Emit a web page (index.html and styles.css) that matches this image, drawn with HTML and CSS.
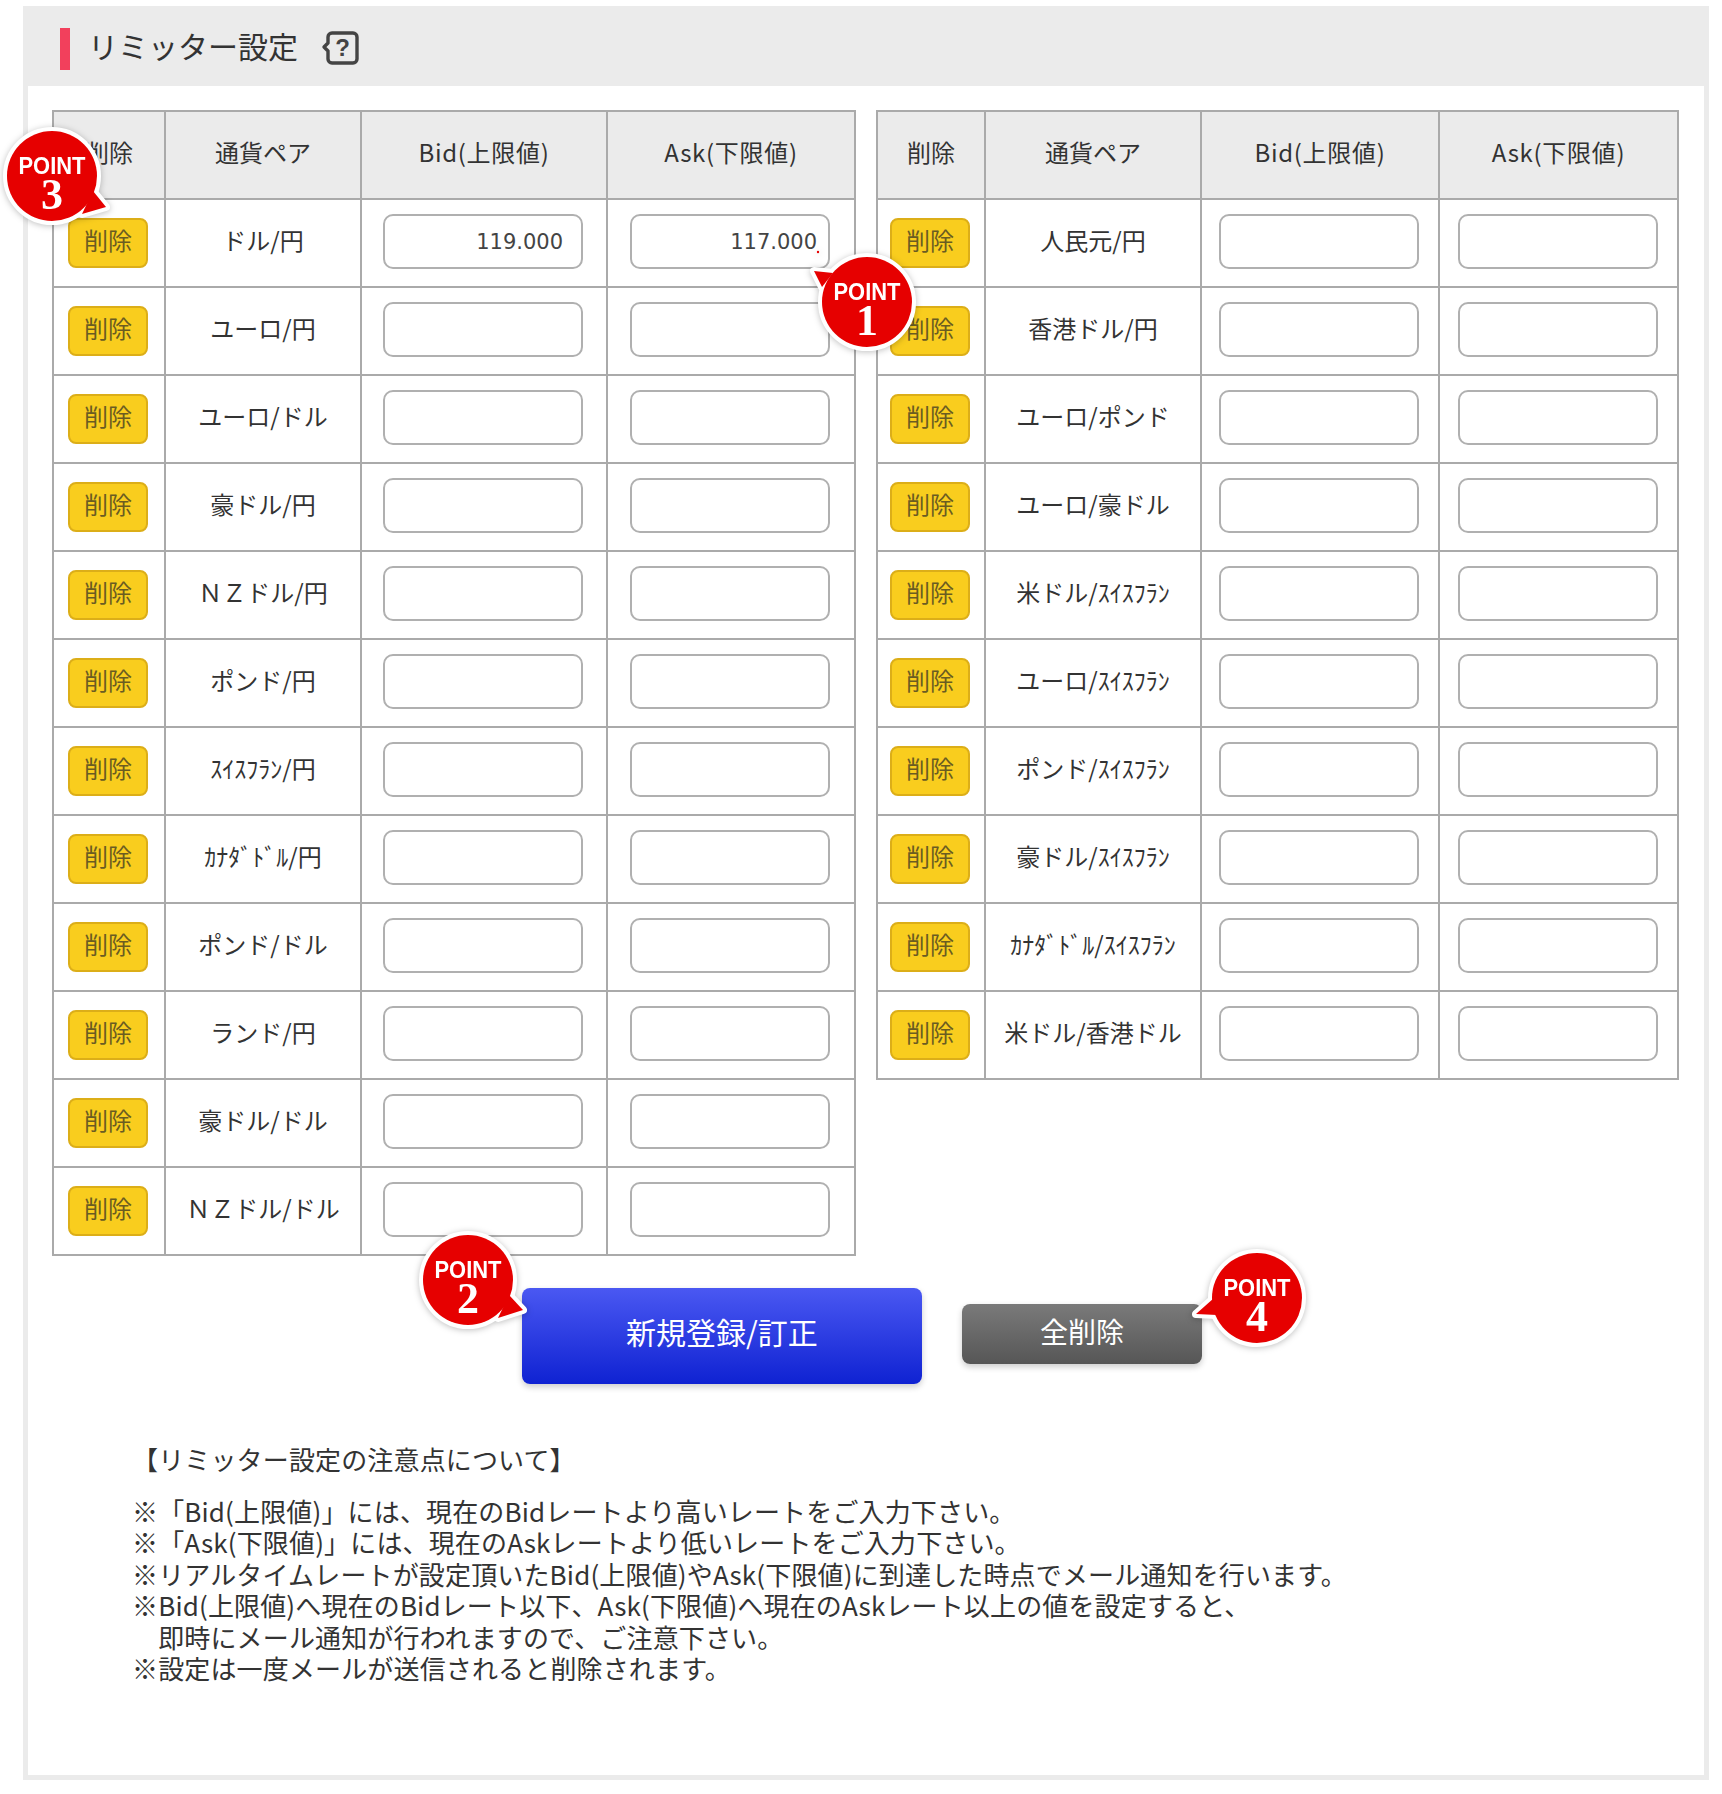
FILE: index.html
```html
<!DOCTYPE html>
<html lang="ja">
<head>
<meta charset="utf-8">
<title>リミッター設定</title>
<link rel="stylesheet" href="styles.css">
</head>
<body>
<div class="page">
  <header class="head">
    <span class="head-bar"></span>
    <h1 class="head-title">リミッター設定</h1>
    <svg class="help" viewBox="0 0 40 36" width="40" height="36"><path d="M8 13V7a4 4 0 0 1 4-4h21a4 4 0 0 1 4 4v22a4 4 0 0 1-4 4H12a4 4 0 0 1-4-4V21L4 17z" fill="none" stroke="#444" stroke-width="3.4" stroke-linejoin="round"/><text x="22.5" y="26" class="help-q">?</text></svg>
  </header>
  <main class="panel">
    <div class="tables">
      <table class="rate rate-left">
        <colgroup><col class="c-l1"><col class="c-l2"><col class="c-l3"><col class="c-l4"></colgroup>
        <tr><th>削除</th><th>通貨ペア</th><th class="th-rate">Bid(上限値)</th><th class="th-rate">Ask(下限値)</th></tr>
        <tr><td><button class="del">削除</button></td><td>ドル/円</td><td><input class="num" value="119.000"></td><td><input class="num num-tight" value="117.000"></td></tr>
        <tr><td><button class="del">削除</button></td><td>ユーロ/円</td><td><input class="num"></td><td><input class="num"></td></tr>
        <tr><td><button class="del">削除</button></td><td>ユーロ/ドル</td><td><input class="num"></td><td><input class="num"></td></tr>
        <tr><td><button class="del">削除</button></td><td>豪ドル/円</td><td><input class="num"></td><td><input class="num"></td></tr>
        <tr><td><button class="del">削除</button></td><td>ＮＺドル/円</td><td><input class="num"></td><td><input class="num"></td></tr>
        <tr><td><button class="del">削除</button></td><td>ポンド/円</td><td><input class="num"></td><td><input class="num"></td></tr>
        <tr><td><button class="del">削除</button></td><td>ｽｲｽﾌﾗﾝ/円</td><td><input class="num"></td><td><input class="num"></td></tr>
        <tr><td><button class="del">削除</button></td><td>ｶﾅﾀﾞﾄﾞﾙ/円</td><td><input class="num"></td><td><input class="num"></td></tr>
        <tr><td><button class="del">削除</button></td><td>ポンド/ドル</td><td><input class="num"></td><td><input class="num"></td></tr>
        <tr><td><button class="del">削除</button></td><td>ランド/円</td><td><input class="num"></td><td><input class="num"></td></tr>
        <tr><td><button class="del">削除</button></td><td>豪ドル/ドル</td><td><input class="num"></td><td><input class="num"></td></tr>
        <tr><td><button class="del">削除</button></td><td>ＮＺドル/ドル</td><td><input class="num"></td><td><input class="num"></td></tr>
      </table>
      <table class="rate rate-right">
        <colgroup><col class="c-r1"><col class="c-r2"><col class="c-r3"><col class="c-r4"></colgroup>
        <tr><th>削除</th><th>通貨ペア</th><th class="th-rate">Bid(上限値)</th><th class="th-rate">Ask(下限値)</th></tr>
        <tr><td><button class="del">削除</button></td><td>人民元/円</td><td><input class="num"></td><td><input class="num"></td></tr>
        <tr><td><button class="del">削除</button></td><td>香港ドル/円</td><td><input class="num"></td><td><input class="num"></td></tr>
        <tr><td><button class="del">削除</button></td><td>ユーロ/ポンド</td><td><input class="num"></td><td><input class="num"></td></tr>
        <tr><td><button class="del">削除</button></td><td>ユーロ/豪ドル</td><td><input class="num"></td><td><input class="num"></td></tr>
        <tr><td><button class="del">削除</button></td><td>米ドル/ｽｲｽﾌﾗﾝ</td><td><input class="num"></td><td><input class="num"></td></tr>
        <tr><td><button class="del">削除</button></td><td>ユーロ/ｽｲｽﾌﾗﾝ</td><td><input class="num"></td><td><input class="num"></td></tr>
        <tr><td><button class="del">削除</button></td><td>ポンド/ｽｲｽﾌﾗﾝ</td><td><input class="num"></td><td><input class="num"></td></tr>
        <tr><td><button class="del">削除</button></td><td>豪ドル/ｽｲｽﾌﾗﾝ</td><td><input class="num"></td><td><input class="num"></td></tr>
        <tr><td><button class="del">削除</button></td><td>ｶﾅﾀﾞﾄﾞﾙ/ｽｲｽﾌﾗﾝ</td><td><input class="num"></td><td><input class="num"></td></tr>
        <tr><td><button class="del">削除</button></td><td>米ドル/香港ドル</td><td><input class="num"></td><td><input class="num"></td></tr>
      </table>
    </div>
    <div class="actions">
      <button class="btn-main">新規登録/訂正</button>
      <button class="btn-clear">全削除</button>
    </div>
    <section class="notes">
      <h2 class="notes-title">【リミッター設定の注意点について】</h2>
      <p class="note">※「Bid(上限値)」には、現在のBidレートより高いレートをご入力下さい。</p>
      <p class="note">※「Ask(下限値)」には、現在のAskレートより低いレートをご入力下さい。</p>
      <p class="note">※リアルタイムレートが設定頂いたBid(上限値)やAsk(下限値)に到達した時点でメール通知を行います。</p>
      <p class="note">※Bid(上限値)へ現在のBidレート以下、Ask(下限値)へ現在のAskレート以上の値を設定すると、</p>
      <p class="note">　即時にメール通知が行われますので、ご注意下さい。</p>
      <p class="note">※設定は一度メールが送信されると削除されます。</p>
    </section>
  </main>

  <svg class="badge badge-1" viewBox="0 0 140 140" width="140" height="140">
    <path class="b-halo" d="M17 39L36 41L25 55Z"/><circle class="b-halo" cx="70" cy="70" r="45"/>
    <path class="b-fill" d="M17 39L36 41L25 55Z"/><circle class="b-fill" cx="70" cy="70" r="45"/>
    <circle class="b-fill" cx="21" cy="20" r="1.2"/>
    <text class="b-point" x="70" y="68" textLength="67" lengthAdjust="spacingAndGlyphs">POINT</text>
    <text class="b-num" x="70" y="103">1</text>
  </svg>
  <svg class="badge badge-2" viewBox="0 0 140 140" width="140" height="140">
    <path class="b-halo" d="M125 100L111 85L100 108Z"/><circle class="b-halo" cx="70" cy="70" r="45"/>
    <path class="b-fill" d="M125 100L111 85L100 108Z"/><circle class="b-fill" cx="70" cy="70" r="45"/>
    <text class="b-point" x="70" y="68" textLength="67" lengthAdjust="spacingAndGlyphs">POINT</text>
    <text class="b-num" x="70" y="103">2</text>
  </svg>
  <svg class="badge badge-3" viewBox="0 0 140 140" width="140" height="140">
    <path class="b-halo" d="M124 101L111 85L100 108Z"/><circle class="b-halo" cx="70" cy="70" r="45"/>
    <path class="b-fill" d="M124 101L111 85L100 108Z"/><circle class="b-fill" cx="70" cy="70" r="45"/>
    <text class="b-point" x="70" y="68" textLength="67" lengthAdjust="spacingAndGlyphs">POINT</text>
    <text class="b-num" x="70" y="103">3</text>
  </svg>
  <svg class="badge badge-4" viewBox="0 0 140 140" width="140" height="140">
    <path class="b-halo" d="M9 86L27 70L30 87Z"/><circle class="b-halo" cx="70" cy="70" r="45"/>
    <path class="b-fill" d="M9 86L27 70L30 87Z"/><circle class="b-fill" cx="70" cy="70" r="45"/>
    <text class="b-point" x="70" y="68" textLength="67" lengthAdjust="spacingAndGlyphs">POINT</text>
    <text class="b-num" x="70" y="103">4</text>
  </svg>
</div>
</body>
</html>
```
FILE: styles.css
```css
* { box-sizing: border-box; }
html, body { margin: 0; padding: 0; background: #fff; }
body {
  font-family: "Noto Sans CJK JP", "Noto Sans", sans-serif;
  color: #333;
  font-size: 24px;
}
.page {
  position: relative;
  width: 1722px;
  height: 1794px;
  padding: 6px 13px 14px 23px;
  display: flex;
  flex-direction: column;
  filter: blur(.45px);
}
.head {
  height: 80px;
  background: #ebebeb;
  display: flex;
  align-items: center;
  padding-left: 37px;
  flex: none;
}
.head-bar {
  width: 10px;
  height: 42px;
  background: #f2405c;
  margin-top: 5px;
  margin-right: 18px;
}
.head-title {
  margin: 0 22px 2px 0;
  font-size: 30px;
  font-weight: 400;
  line-height: 1;
  letter-spacing: 0;
}
.help { flex: none; margin-top: 3px; }
.help-q {
  font-family: "Liberation Sans", sans-serif;
  font-weight: 700;
  font-size: 24px;
  fill: #444;
  text-anchor: middle;
}
.panel {
  flex: 1;
  border: 5px solid #ebebeb;
  border-top: 0;
  background: #fff;
  padding: 24px 0 0 24px;
}
.tables {
  display: flex;
  align-items: flex-start;
  gap: 20px;
}
.rate {
  border-collapse: collapse;
  table-layout: fixed;
}
.rate-left { width: 802px; }
.rate-right { width: 801px; }
.c-l1 { width: 112px; }
.c-l2 { width: 196px; }
.c-l3 { width: 246px; }
.c-l4 { width: 248px; }
.c-r1 { width: 108px; }
.c-r2 { width: 216px; }
.c-r3 { width: 238px; }
.c-r4 { width: 239px; }
.rate th, .rate td {
  border: 2px solid #aaa;
  height: 88px;
  padding: 0 0 5px;
  text-align: center;
  vertical-align: middle;
  font-size: 24px;
  font-weight: 400;
  line-height: 1.2;
  white-space: nowrap;
}
.rate th { background: #ebebeb; }
.rate .th-rate { letter-spacing: .7px; }
.del {
  display: inline-block;
  vertical-align: middle;
  width: 80px;
  height: 50px;
  margin: 5px 2px 0 0;
  padding: 0 0 6px;
  border: 2px solid #dcae18;
  border-radius: 8px;
  background: #f9cd1e;
  color: #6a5c22;
  font: 400 24px "Noto Sans CJK JP", sans-serif;
  line-height: 1;
}
.num {
  display: inline-block;
  vertical-align: middle;
  width: 200px;
  height: 55px;
  margin: 2px 2px 0 0;
  border: 2px solid #b0b0b0;
  border-radius: 10px;
  background: #fff;
  padding: 0 18px 0 0;
  text-align: right;
  color: #444;
  font: 400 21px "DejaVu Sans", sans-serif;
  outline: none;
}
.num-tight { padding-right: 11px; }
.actions {
  display: flex;
  align-items: center;
  margin-top: 32px;
  padding-left: 470px;
  gap: 40px;
}
.btn-main {
  width: 400px;
  height: 96px;
  border: 0;
  border-radius: 8px;
  padding: 0 0 10px;
  background: linear-gradient(#4a58f2, #0f22d2);
  box-shadow: 0 3px 6px rgba(0,0,0,.2);
  color: #fff;
  font: 400 30px "Noto Sans CJK JP", sans-serif;
}
.btn-clear {
  width: 240px;
  height: 60px;
  border: 0;
  border-radius: 8px;
  padding: 0 0 6px;
  margin-bottom: 4px;
  background: linear-gradient(#7a7a7a, #565656);
  box-shadow: 0 3px 6px rgba(0,0,0,.2);
  color: #fff;
  font: 400 28px "Noto Sans CJK JP", sans-serif;
}
.notes {
  margin-top: 59px;
  padding-left: 80px;
  font-size: 26px;
  letter-spacing: .15px;
}
.notes-title {
  margin: 0 0 21px;
  font-size: 26px;
  font-weight: 400;
  line-height: 31px;
}
.note {
  margin: 0;
  line-height: 31.4px;
  white-space: nowrap;
}
.badge {
  position: absolute;
  filter: drop-shadow(0 1px 3px rgba(0,0,0,.25));
}
.badge-1 { left: 797px; top: 232px; }
.badge-2 { left: 398px; top: 1210px; }
.badge-3 { left: -18px; top: 106px; }
.badge-4 { left: 1187px; top: 1228px; }
.b-halo { fill: #fff; stroke: #fff; stroke-width: 8px; stroke-linejoin: round; }
.b-fill { fill: #e60000; }
.b-point {
  font-family: "Liberation Sans", sans-serif;
  font-weight: 700;
  font-size: 24px;
  fill: #fff;
  text-anchor: middle;
}
.b-num {
  font-family: "Liberation Serif", serif;
  font-weight: 700;
  font-size: 44px;
  fill: #fff;
  text-anchor: middle;
}
```
